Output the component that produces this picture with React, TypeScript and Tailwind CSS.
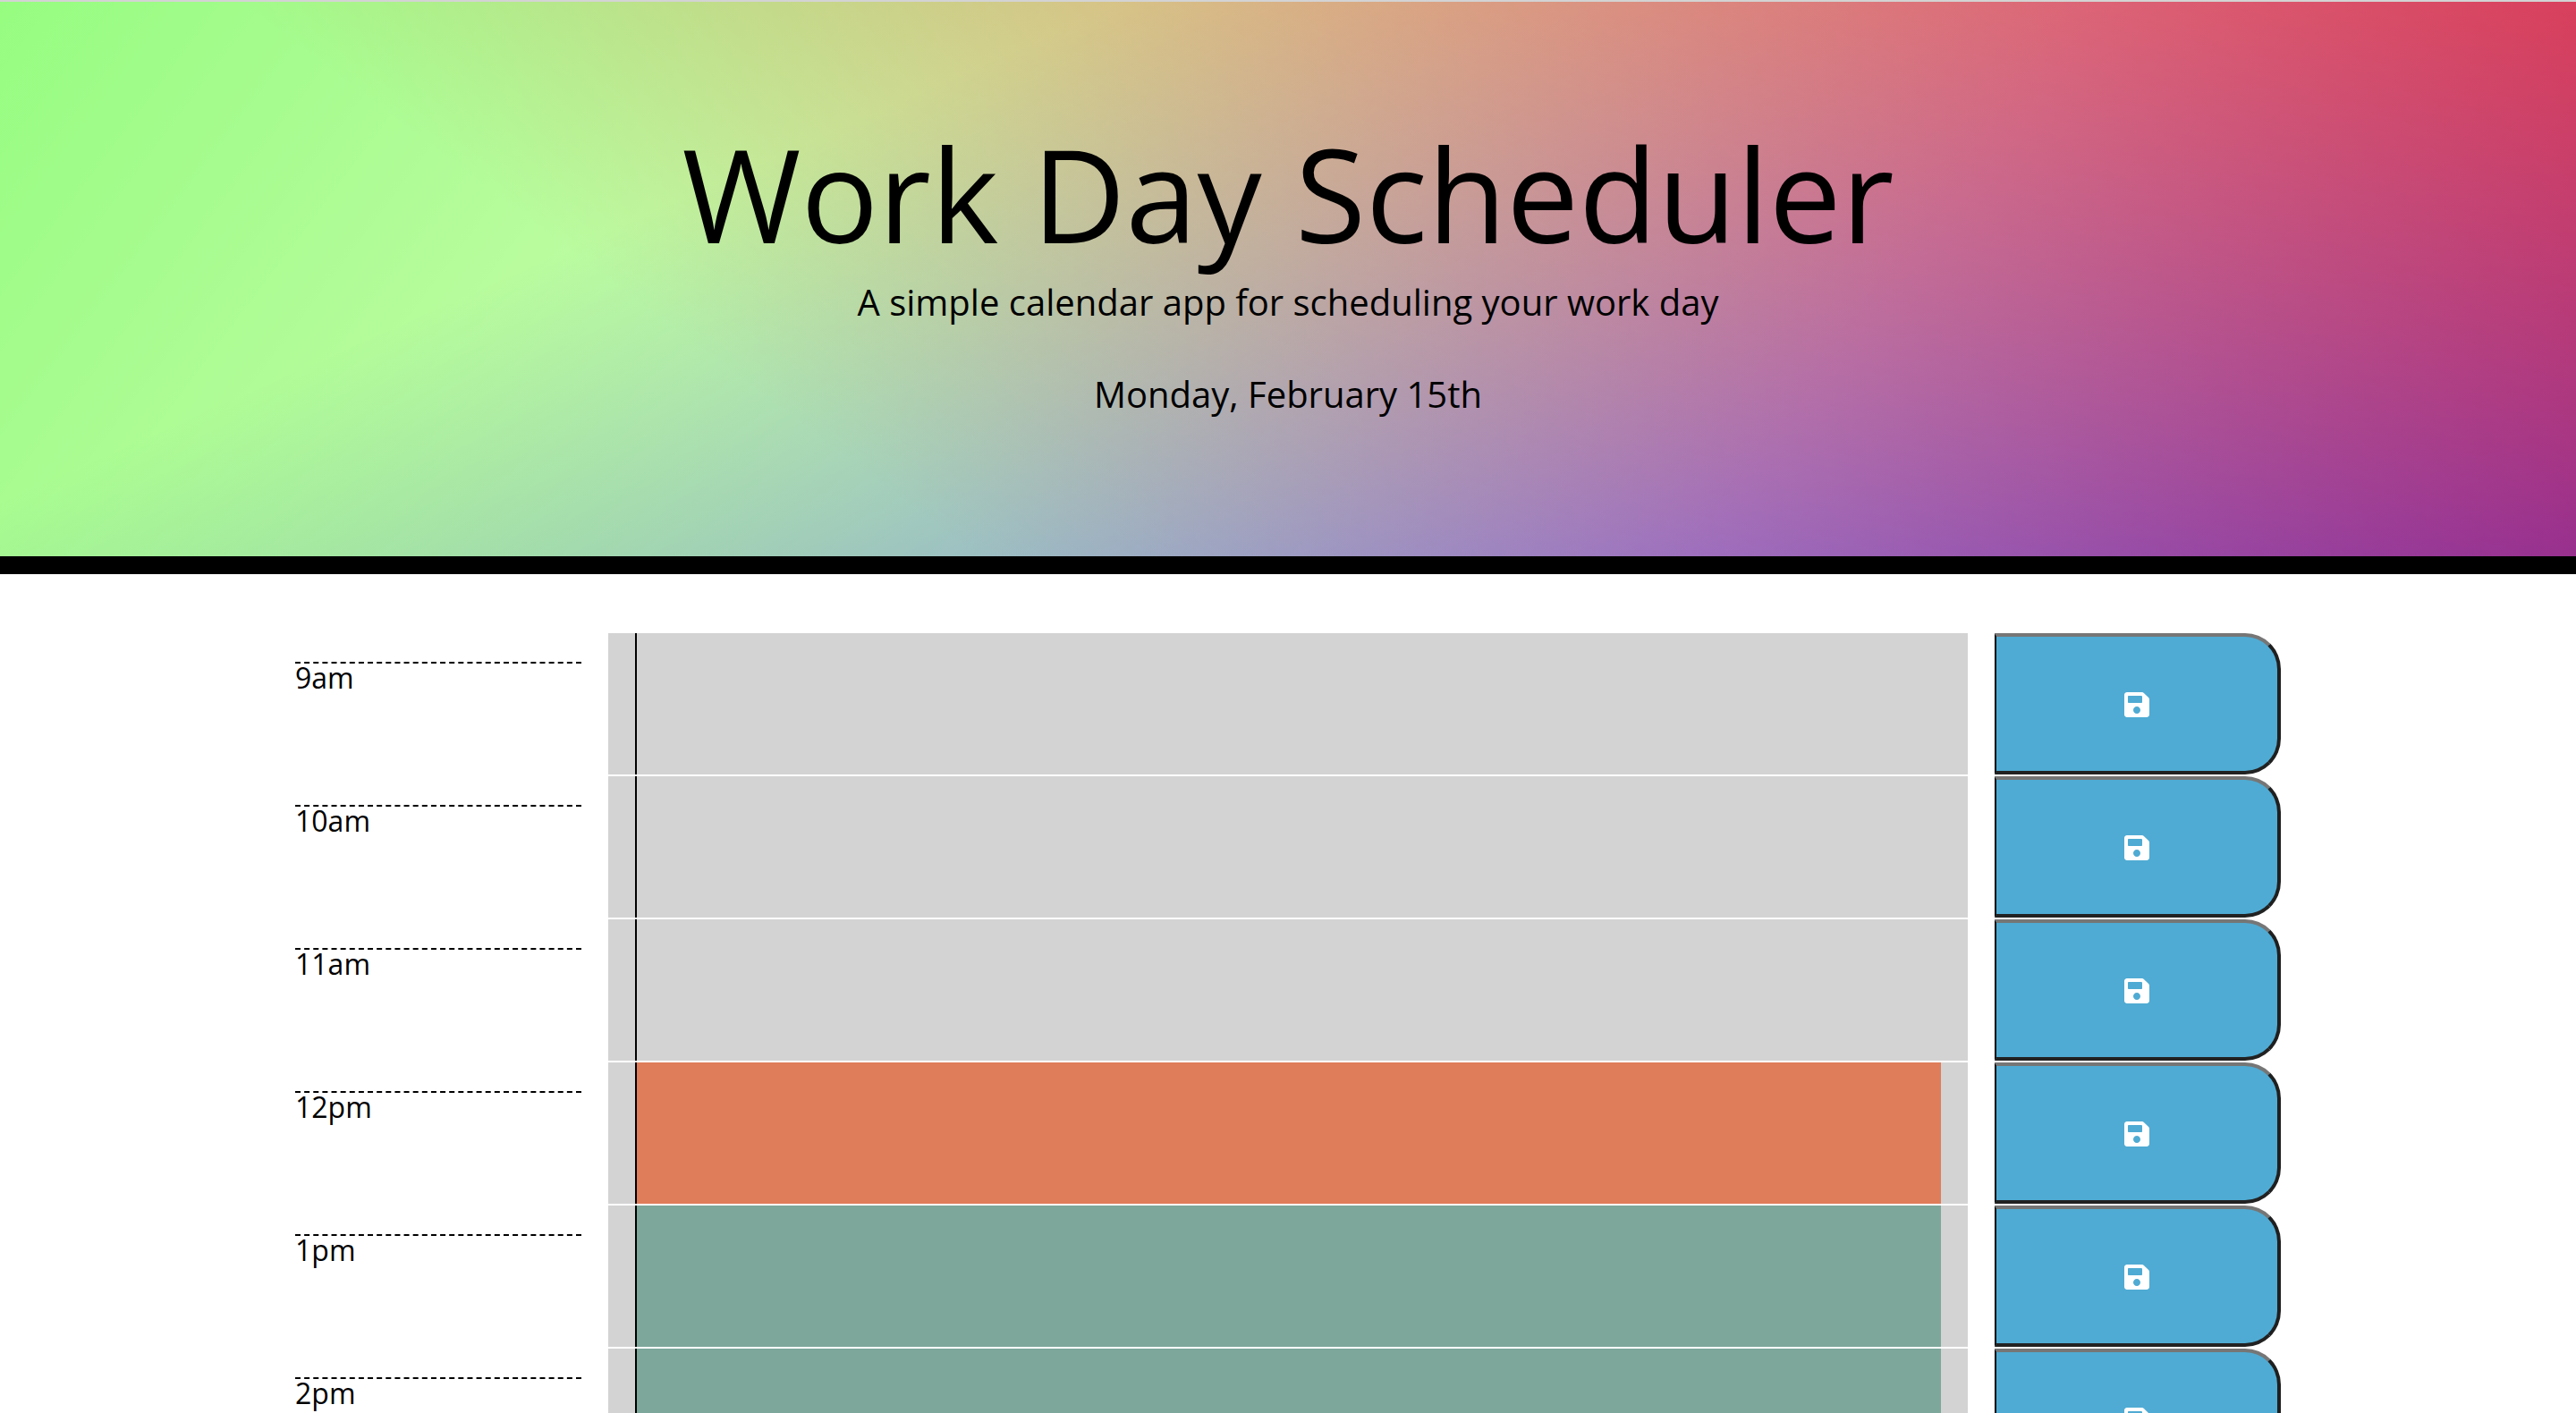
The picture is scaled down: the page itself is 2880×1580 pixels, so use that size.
import { FaSave } from 'react-icons/fa'

const hours = [
  { label: '9am', state: 'past' },
  { label: '10am', state: 'past' },
  { label: '11am', state: 'past' },
  { label: '12pm', state: 'present' },
  { label: '1pm', state: 'future' },
  { label: '2pm', state: 'future' },
  { label: '3pm', state: 'future' },
  { label: '4pm', state: 'future' },
  { label: '5pm', state: 'future' },
]

const stateColors: Record<string, string> = {
  past: 'bg-[#d3d3d3]',
  present: 'bg-[#df7c5a]',
  future: 'bg-[#7ca79a]',
}

export default function App() {
  return (
    <div className="h-[1580px] overflow-hidden bg-white font-['Open_Sans',sans-serif] text-black">
      {/* Header */}
      <header className="h-[642px] border-t-2 border-b-[20px] border-t-[#d3d3d3] border-b-black bg-[#fafbd6] bg-[linear-gradient(217deg,rgba(255,0,0,0.6),rgba(255,0,0,0)_70.71%),linear-gradient(127deg,rgba(0,255,0,0.4),rgba(0,255,0,0)_70.71%),linear-gradient(336deg,rgba(0,0,255,0.68),rgba(0,0,255,0)_70.71%)] pt-[128px] text-center">
        <h1 className="text-[144px] leading-[172px] font-normal">Work Day Scheduler</h1>
        <p className="mt-[6px] text-[40px] leading-[60px] font-normal">A simple calendar app for scheduling your work day</p>
        <p className="mt-[43px] text-[40px] leading-[60px] font-normal">Monday, February 15th</p>
      </header>

      {/* Time blocks */}
      <div className="mx-auto mt-[66px] w-[2280px]">
        {hours.map((hour) => (
          <div key={hour.label} className="grid h-[160px] grid-cols-[380px_1520px_380px]">
            <div className="px-[30px] pt-[32px]">
              <div className="border-t-2 border-dashed border-black text-[32px] leading-[32px]">{hour.label}</div>
            </div>
            <div className="mb-[2px] bg-[#d3d3d3] px-[30px]">
              <div className={`h-full border-l-2 border-black ${stateColors[hour.state]}`}></div>
            </div>
            <div className="px-[30px]">
              <button className="flex h-[158px] w-full items-center justify-center rounded-r-[40px] border-t-4 border-r-4 border-b-4 border-l-2 border-t-[#767676] border-r-[#1f1f1f] border-b-[#222222] border-l-black bg-[#4fabd3] pt-[2px] text-white">
                <FaSave className="h-[32px] w-[28px]" />
              </button>
            </div>
          </div>
        ))}
      </div>
    </div>
  )
}
